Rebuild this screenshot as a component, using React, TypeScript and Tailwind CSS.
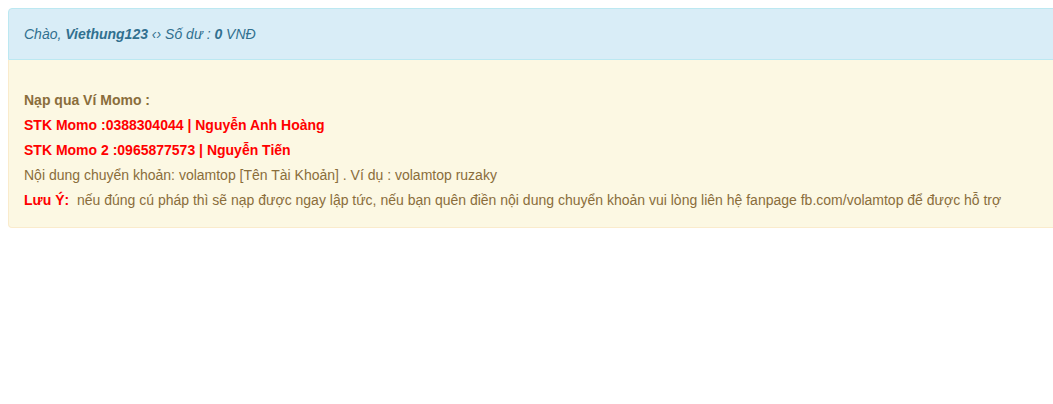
import React from 'react';

export default function App() {
  return (
    <div className="w-full overflow-hidden bg-white min-h-[404px] font-['Liberation_Sans',Arial,sans-serif] text-[14px]">
      <div className="w-[1070px] p-2">
        <div className="border border-[#bce8f1] bg-[#d9edf7] text-[#31708f] rounded-t-[4px] px-[15px] py-[15px] leading-5 italic">
          Chào, <b>Viethung123</b> ‹› Số dư : <b>0</b> VNĐ
        </div>
        <div className="border border-t-0 border-[#faebcc] bg-[#fcf8e3] text-[#8a6d3b] rounded-b-[4px] px-[15px] pt-[28px] pb-[14px] leading-[25px]">
          <div className="font-bold">Nạp qua Ví Momo :</div>
          <div className="font-bold text-[#ff0000]">STK Momo :0388304044 | Nguyễn Anh Hoàng</div>
          <div className="font-bold text-[#ff0000]">STK Momo 2 :0965877573 | Nguyễn Tiến</div>
          <div>Nội dung chuyển khoản: volamtop [Tên Tài Khoản] . Ví dụ : volamtop ruzaky</div>
          <div>
            <span className="font-bold text-[#ff0000]">Lưu Ý:</span>&nbsp; nếu đúng cú pháp thì sẽ nạp được ngay lập tức, nếu bạn quên điền nội dung chuyển khoản vui lòng liên hệ fanpage fb.com/volamtop để được hỗ trợ
          </div>
        </div>
      </div>
    </div>
  );
}
